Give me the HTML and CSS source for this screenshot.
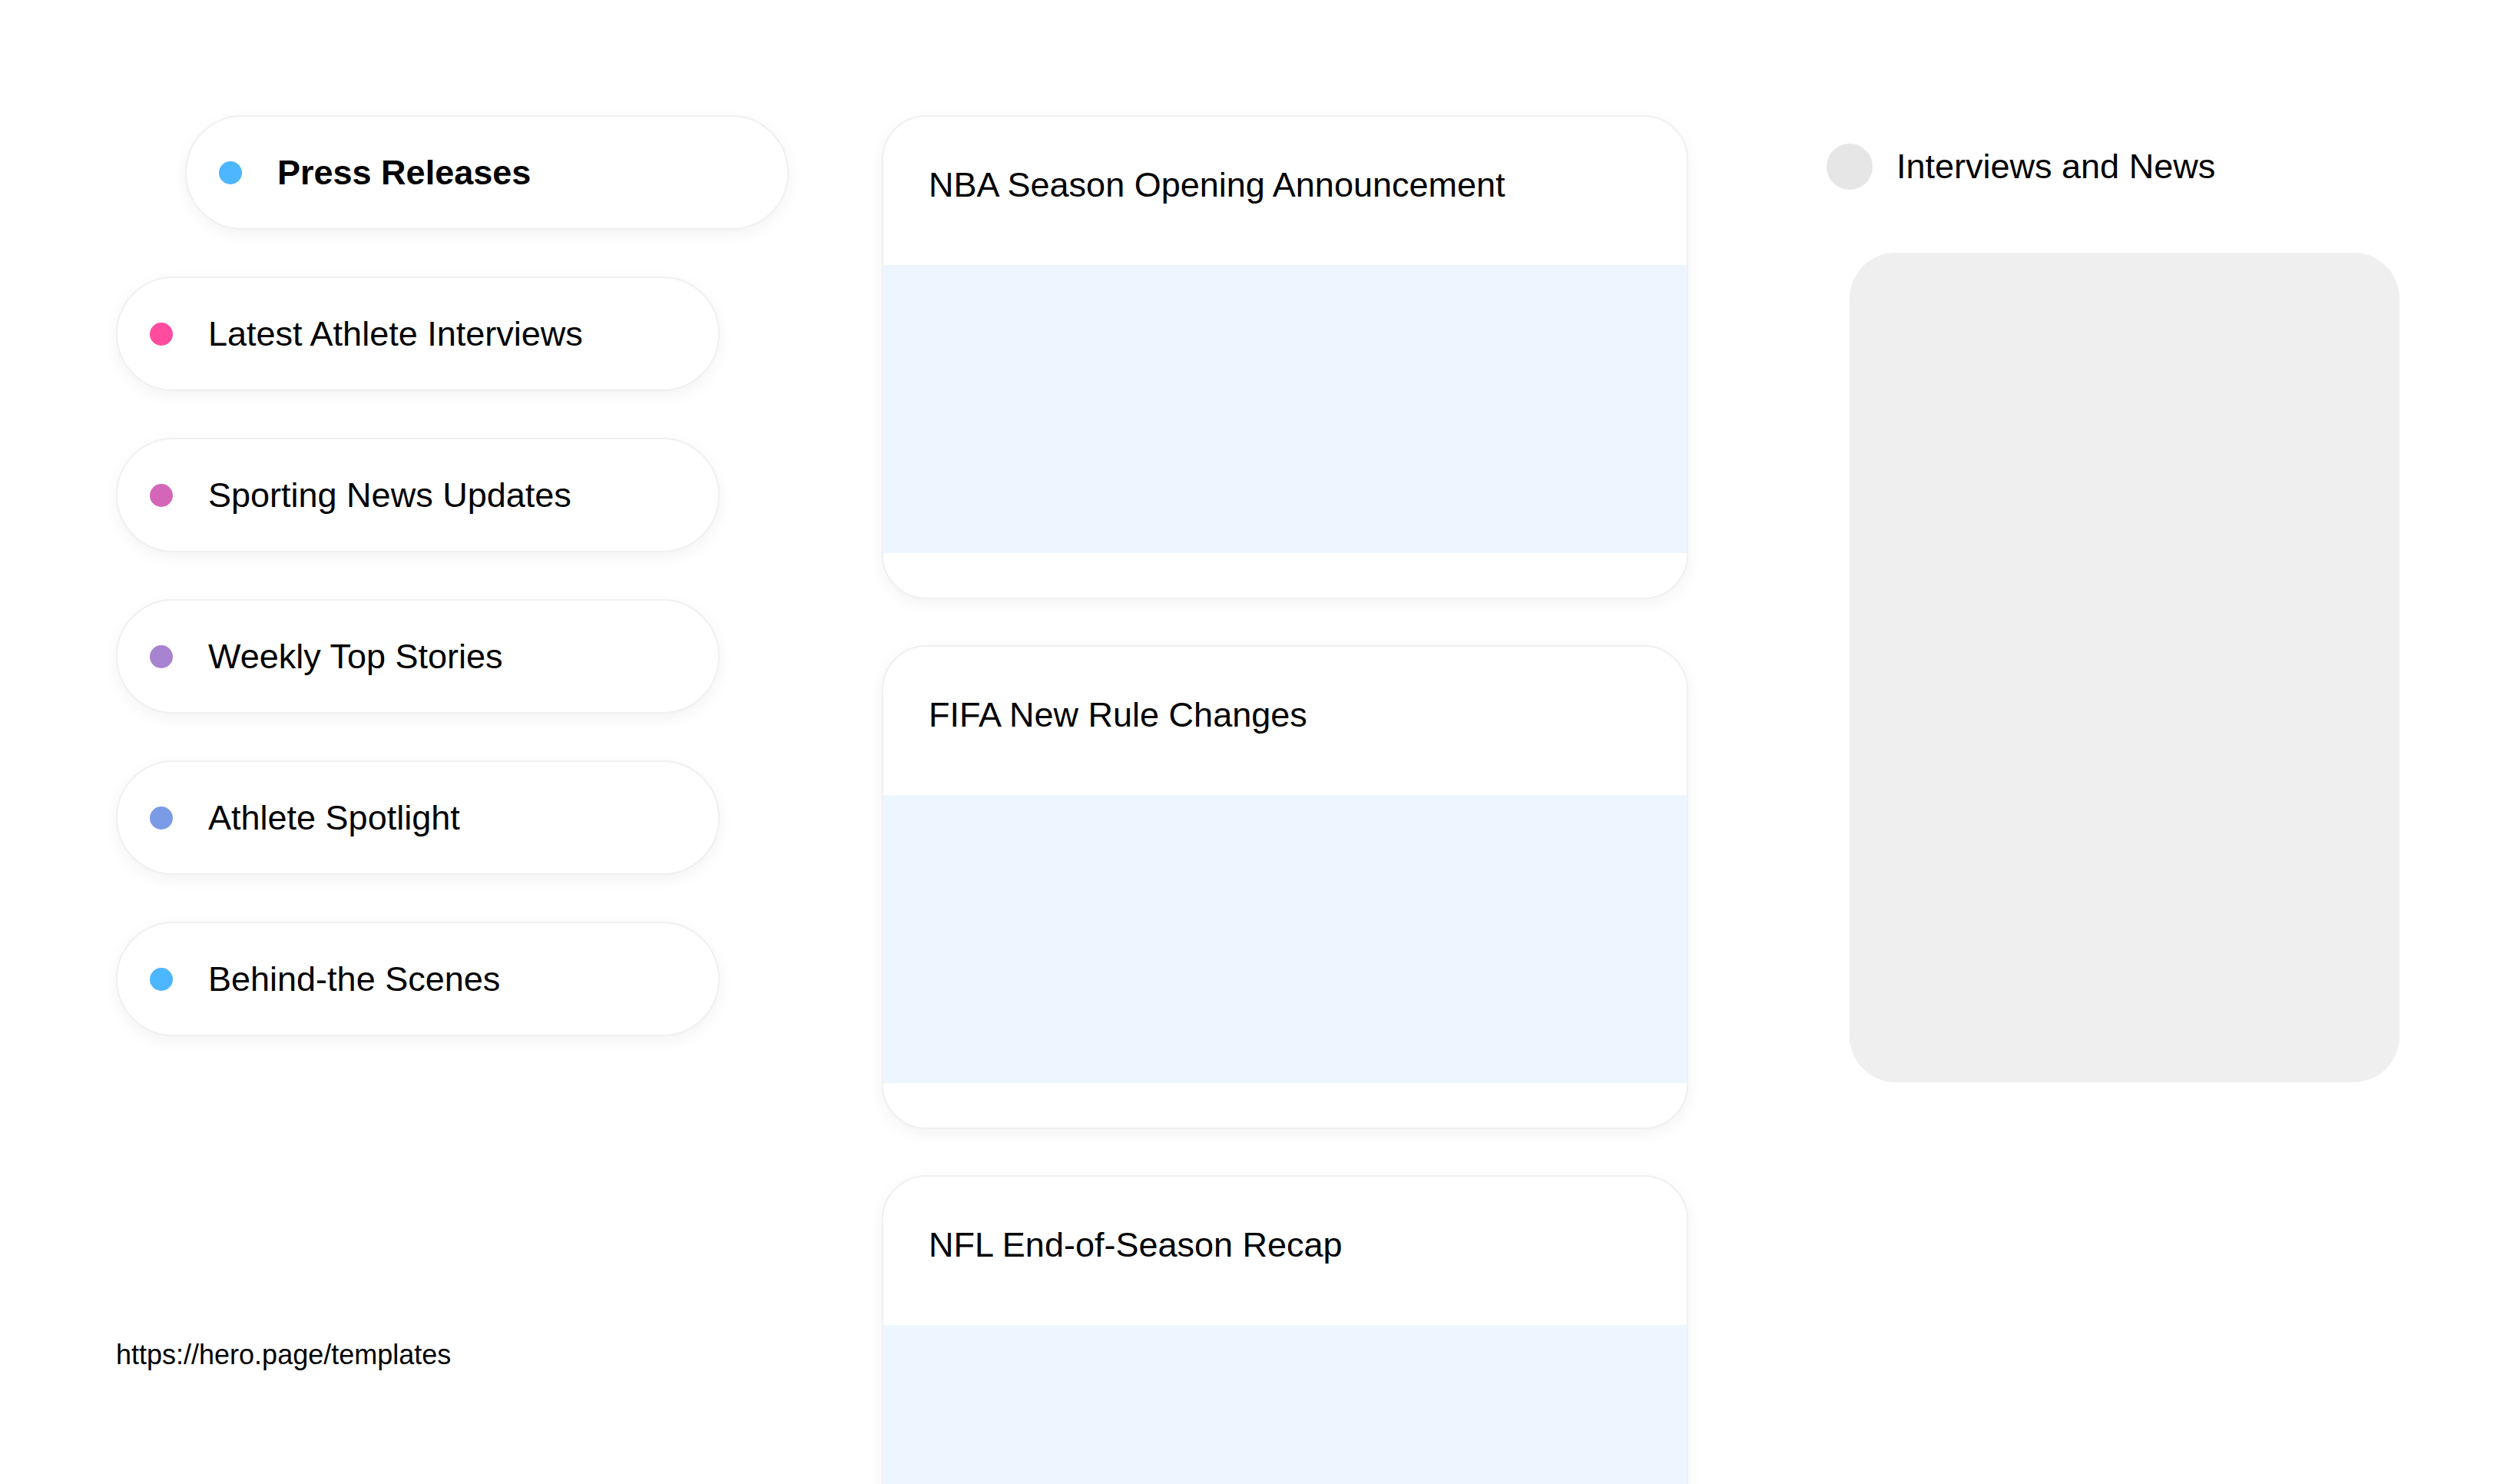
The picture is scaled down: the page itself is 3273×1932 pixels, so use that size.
FILE: index.html
```html
<!doctype html>
<html lang="en">

<head>
    <meta charset="UTF-8">
    <meta name="viewport" content="width=device-width, initial-scale=1.0">
    <title>Interviews and News</title>
    <link rel="stylesheet" href="styles.css">
</head>

<body>
    <main class="page">
        <aside class="topics">
            <ul class="topics--list">
                <li class="topic topic--active"><span class="topic--dot dot-blue"></span>Press Releases</li>
                <li class="topic"><span class="topic--dot dot-pink"></span>Latest Athlete Interviews</li>
                <li class="topic"><span class="topic--dot dot-magenta"></span>Sporting News Updates</li>
                <li class="topic"><span class="topic--dot dot-purple"></span>Weekly Top Stories</li>
                <li class="topic"><span class="topic--dot dot-periwinkle"></span>Athlete Spotlight</li>
                <li class="topic"><span class="topic--dot dot-sky"></span>Behind-the Scenes</li>
            </ul>
            <p class="topics--link">https://hero.page/templates</p>
        </aside>

        <section class="feed">
            <article class="card">
                <h2 class="card--title">NBA Season Opening Announcement</h2>
                <div class="card--media"></div>
                <div class="card--foot"></div>
            </article>
            <article class="card">
                <h2 class="card--title">FIFA New Rule Changes</h2>
                <div class="card--media"></div>
                <div class="card--foot"></div>
            </article>
            <article class="card">
                <h2 class="card--title">NFL End-of-Season Recap</h2>
                <div class="card--media"></div>
                <div class="card--foot"></div>
            </article>
        </section>

        <section class="side">
            <div class="side--head">
                <span class="side--avatar"></span>
                <span class="side--title">Interviews and News</span>
            </div>
            <div class="side--panel"></div>
        </section>
    </main>
</body>

</html>
```

FILE: styles.css
```css
html,
body {
    margin: 0;
    background: #ffffff;
}

body {
    font-family: "Liberation Sans", Arial, sans-serif;
    color: #000000;
    overflow: hidden;
}

.page {
    display: flex;
    align-items: flex-start;
    padding: 150px 0 0 151px;
}

/* left column */
.topics {
    width: 876px;
    flex-shrink: 0;
}

.topics--list {
    list-style: none;
    margin: 0;
    padding: 0;
    display: flex;
    flex-direction: column;
    gap: 61px;
}

.topic {
    box-sizing: border-box;
    width: 786px;
    height: 149px;
    display: flex;
    align-items: center;
    gap: 46px;
    padding-left: 42px;
    background: #ffffff;
    border: 2px solid #f0f0f0;
    border-radius: 75px;
    box-shadow: 0 6px 20px rgba(0, 0, 0, 0.05);
    font-size: 45px;
}

.topic--active {
    margin-left: 90px;
    font-weight: 700;
}

.topic--dot {
    width: 30px;
    height: 30px;
    border-radius: 50%;
    flex-shrink: 0;
}

.dot-blue { background: #4cb6ff; }
.dot-pink { background: #ff4c9f; }
.dot-magenta { background: #d466b8; }
.dot-purple { background: #a883d1; }
.dot-periwinkle { background: #7a9be6; }
.dot-sky { background: #4cb6ff; }

.topics--link {
    margin: 394px 0 0;
    font-size: 36px;
}

/* middle column */
.feed {
    width: 1050px;
    flex-shrink: 0;
    margin-left: 121px;
    display: flex;
    flex-direction: column;
    gap: 60px;
}

.card {
    background: #ffffff;
    border: 2px solid #f0f0f0;
    border-radius: 58px;
    box-shadow: 0 6px 20px rgba(0, 0, 0, 0.05);
    overflow: hidden;
}

.card--title {
    box-sizing: border-box;
    height: 193px;
    margin: 0;
    padding: 63px 59px 0;
    font-size: 45px;
    font-weight: 400;
}

.card--media {
    height: 375px;
    background: #edf6fe;
}

.card--foot {
    height: 58px;
}

/* right column */
.side {
    width: 746px;
    flex-shrink: 0;
    margin: 37px 0 0 180px;
}

.side--head {
    display: flex;
    align-items: center;
    gap: 31px;
    font-size: 45px;
}

.side--avatar {
    width: 60px;
    height: 60px;
    border-radius: 50%;
    background: #e6e6e6;
}

.side--panel {
    width: 716px;
    height: 1080px;
    margin: 82px 0 0 30px;
    border-radius: 60px;
    background: #efefef;
}
```
